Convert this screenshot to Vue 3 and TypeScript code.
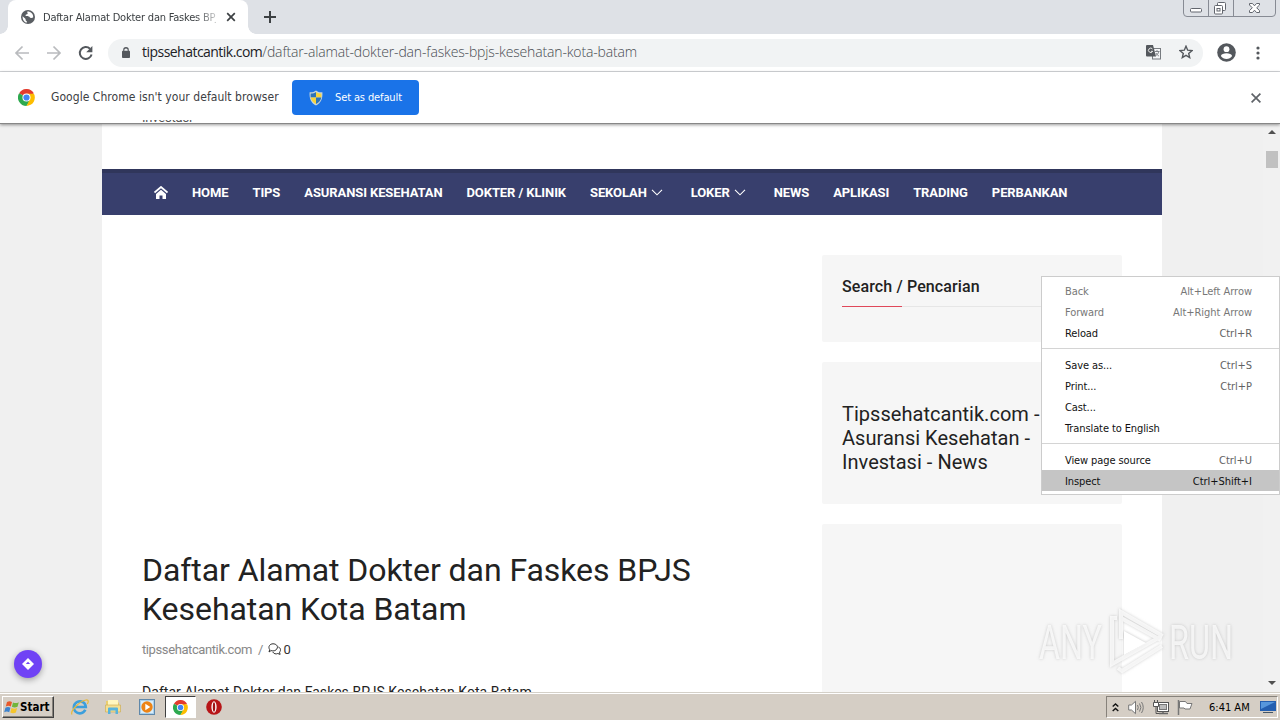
<script setup lang="ts">
interface NavItem { label: string; dropdown?: boolean }
interface MenuItem { label: string; shortcut?: string; state?: 'disabled' | 'active' }

const navItems: NavItem[] = [
  { label: 'HOME' },
  { label: 'TIPS' },
  { label: 'ASURANSI KESEHATAN' },
  { label: 'DOKTER / KLINIK' },
  { label: 'SEKOLAH', dropdown: true },
  { label: 'LOKER', dropdown: true },
  { label: 'NEWS' },
  { label: 'APLIKASI' },
  { label: 'TRADING' },
  { label: 'PERBANKAN' },
]

const menuGroups: MenuItem[][] = [
  [
    { label: 'Back', shortcut: 'Alt+Left Arrow', state: 'disabled' },
    { label: 'Forward', shortcut: 'Alt+Right Arrow', state: 'disabled' },
    { label: 'Reload', shortcut: 'Ctrl+R' },
  ],
  [
    { label: 'Save as...', shortcut: 'Ctrl+S' },
    { label: 'Print...', shortcut: 'Ctrl+P' },
    { label: 'Cast...' },
    { label: 'Translate to English' },
  ],
  [
    { label: 'View page source', shortcut: 'Ctrl+U' },
    { label: 'Inspect', shortcut: 'Ctrl+Shift+I', state: 'active' },
  ],
]
</script>

<template>
  <div class="screen">
    <header class="tabstrip">
      <div class="tab">
        <svg class="globe" width="14" height="14" viewBox="0 0 14 14">
          <circle cx="7" cy="7" r="7" fill="#5a5e63" />
          <path d="M1.600 6.200 4.600 9v1.200l1.300 1.200v1.200C3 12.200 1.400 9.500 1.600 6.200zM6.300 1.500c-.2 1.600.5 1.500.4 2.600-.9.500-2 .2-2.200 1.300-.1.900 2.800.3 3.600 1.200.6.700.9 1.400 1.800 1.500 1 .1 1.900-.2 2.300-.8C12.400 4 10 1.400 6.300 1.500z" fill="#fff" />
        </svg>
        <span class="tab-title">Daftar Alamat Dokter dan Faskes BPJS</span>
        <svg class="tab-close" width="10" height="10" viewBox="0 0 10 10"><path d="M1.200 1.200l7.600 7.600M8.800 1.200L1.200 8.800" stroke="#3c4043" stroke-width="1.700" /></svg>
      </div>
      <svg class="new-tab" width="12" height="12" viewBox="0 0 12 12"><path d="M6 0v12M0 6h12" stroke="#3c4043" stroke-width="2" /></svg>
      <svg class="window-buttons" width="94" height="18" viewBox="0 0 94 18">
        <path d="M.5 0v13q0 3.500 3.500 3.500h85q3.500 0 3.500-3.500V0M25.500 0v16M50.500 0v16" fill="none" stroke="#878b94" />
        <rect x="7.500" y="8.500" width="11" height="3.500" rx="1" fill="#fff" stroke="#62666e" />
        <g fill="#fff" stroke="#62666e"><rect x="34.500" y="2.500" width="8" height="8" rx="1" /><rect x="31.500" y="5.500" width="8" height="8.500" rx="1" /><rect x="34" y="8.500" width="3" height="2.500" /></g>
        <path d="M66.500 3.500h3l2 2.300 2-2.300h3v1.500l-2.800 2.800 2.800 2.800v1.900h-3l-2-2.300-2 2.300h-3v-1.900l2.800-2.800-2.800-2.800z" fill="#fff" stroke="#62666e" />
      </svg>
    </header>

    <div class="toolbar">
      <svg class="nav-buttons" width="80" height="20" viewBox="0 0 80 20">
        <path d="M15 10H2M8.500 3.500L2 10l6.500 6.500M33 10h13M39.500 3.500L46 10l-6.500 6.500" fill="none" stroke="#b9bbbe" stroke-width="1.700" />
        <path d="M76 5.700A6 6 0 1 0 77.600 11.600" fill="none" stroke="#54585d" stroke-width="2" /><path d="M78.400 3v6.200h-6.200z" fill="#54585d" />
      </svg>
      <div class="omnibox">
        <svg class="lock" width="8" height="11" viewBox="0 0 10 12" preserveAspectRatio="none"><rect x="0" y="4" width="10" height="8" rx="1" fill="#54585d" /><path d="M2.200 5V3.200a2.800 2.400 0 0 1 5.600 0V5" fill="none" stroke="#54585d" stroke-width="1.400" /></svg>
        <span class="url"><b>tipssehatcantik.com</b>/daftar-alamat-dokter-dan-faskes-bpjs-kesehatan-kota-batam</span>
        <svg class="translate" width="15" height="15" viewBox="0 0 15 15">
          <rect x="6.500" y="3.500" width="8" height="10.500" fill="#f5f6f8" stroke="#777b80" />
          <path d="M1 0h6l3 11.500H1q-1 0-1-1V1q0-1 1-1z" fill="#54585d" />
          <path d="M6.500 4a2.200 2.200 0 1 0 .2 2.300H5" fill="none" stroke="#eee" />
          <path d="M9 6.500h4.500M11 5v1.500M12.700 6.500c-.2 2-1.500 3.300-3 4M10 8c.8 1.600 1.800 2.500 3 3" fill="none" stroke="#777b80" stroke-width=".9" />
        </svg>
        <svg class="star" width="14" height="14" viewBox="0 0 14 14"><path d="M7 1.200l1.700 4 4.300.4-3.300 2.800 1 4.200L7 10.400l-3.700 2.200 1-4.200L1 5.600l4.300-.4z" fill="none" stroke="#54585d" stroke-width="1.400" /></svg>
      </div>
      <svg class="avatar" width="19" height="19" viewBox="0 0 19 19"><circle cx="9.500" cy="9.500" r="9.300" fill="#54585d" /><circle cx="9.500" cy="6.200" r="2.900" fill="#fff" /><path d="M3.900 13c.5-3.800 10.700-3.800 11.200 0a6.700 6.700 0 0 1-11.200 0z" fill="#fff" /></svg>
      <svg class="kebab" width="4" height="14" viewBox="0 0 4 14" fill="#54585d"><circle cx="2" cy="2" r="1.600" /><circle cx="2" cy="7" r="1.600" /><circle cx="2" cy="12" r="1.600" /></svg>
    </div>

    <div class="infobar">
      <svg width="17" height="17" viewBox="0 0 18 18">
        <path d="M9 9L1.200 4.500A9 9 0 0 1 16.800 4.500z" fill="#e33b2e" /><path d="M9 9L1.200 4.500A9 9 0 0 0 9 18l4-6z" fill="#2da94f" /><path d="M9 5h7.900A9 9 0 0 1 9 18l3.500-7z" fill="#fdbd00" />
        <circle cx="9" cy="9" r="4.300" fill="#fff" /><circle cx="9" cy="9" r="3.300" fill="#4285f4" />
      </svg>
      <span class="info-text">Google Chrome isn't your default browser</span>
      <button class="set-default">
        <svg width="14" height="16" viewBox="0 0 14 16">
          <path d="M7 .5C5 2 3 2.500.6 2.300.2 8.500 1.800 13 7 15.500 12.200 13 13.800 8.500 13.400 2.300 11 2.500 9 2 7 .5z" fill="#c5d4db" />
          <path d="M7 2v5.500H1.700C1.500 6 1.600 5 1.700 3.600 4 3.600 5.500 3 7 2z" fill="#2e74b8" /><path d="M7 2v5.500h5.300c.2-1.500.1-2.500 0-3.900C10 3.600 8.500 3 7 2zM7 7.500V14C4 12.500 2.200 10.500 1.700 7.500z" fill="#f7d43c" /><path d="M7 7.500V14c3-1.500 4.800-3.500 5.300-6.500z" fill="#2e74b8" />
        </svg>
        <span>Set as default</span>
      </button>
      <svg class="info-close" width="10" height="10" viewBox="0 0 10 10"><path d="M.6.6l8.800 8.800M9.400.6L.6 9.400" stroke="#5f6368" stroke-width="1.700" /></svg>
      <div class="tagline"><span>Investasi</span></div>
    </div>

    <main class="viewport">
      <div class="page">
        <nav class="site-nav">
          <svg class="home" width="14" height="13" viewBox="0 0 14 13"><path d="M.5 6.500L7 1l6.500 5.500" fill="none" stroke="#fff" stroke-width="1.800" /><path d="M7 3.800l5 4.300V13H8.500V9.500h-3V13H2V8.100z" fill="#fff" /></svg>
          <a v-for="item in navItems" :key="item.label" :class="{ dropdown: item.dropdown }">
            {{ item.label }}<svg v-if="item.dropdown" width="12" height="7" viewBox="0 0 12 7"><path d="M1 .8l5 5 5-5" fill="none" stroke="#fff" stroke-width="1.100" /></svg>
          </a>
        </nav>
        <div class="columns">
          <article>
            <h1>Daftar Alamat Dokter dan Faskes BPJS Kesehatan Kota Batam</h1>
            <div class="meta">
              <span class="author">tipssehatcantik.com</span><span class="slash">/</span>
              <svg width="13" height="13" viewBox="0 0 13 13" fill="none" stroke="#333"><path d="M1 9l.7-2.300C-.3 3.500 2 .8 5 .8s5 2 4.300 4.200C8.600 7.500 5.500 8.600 3 7.600z" /><path d="M10.300 4c2.700 1 2.700 3.600 1.200 5.100l.6 2.300-2.300-.9c-2 .9-4 .3-5-1.500" /></svg>
              <span class="count">0</span>
            </div>
            <p>Daftar Alamat Dokter dan Faskes BPJS Kesehatan Kota Batam</p>
          </article>
          <aside>
            <section class="card search"><h2>Search / Pencarian</h2></section>
            <section class="card about"><h3>Tipssehatcantik.com - Asuransi Kesehatan - Investasi - News</h3></section>
            <section class="card blank"></section>
          </aside>
        </div>
      </div>
      <div class="scrollbar">
        <svg width="8" height="4" viewBox="0 0 8 4"><path d="M0 4l4-4 4 4z" fill="#505050" /></svg>
        <i class="thumb"></i>
        <svg width="8" height="4" viewBox="0 0 8 4"><path d="M0 0l4 4 4-4z" fill="#505050" /></svg>
      </div>
      <button class="bubble"><svg width="12" height="12" viewBox="0 0 12 12"><path d="M6 0l6 6-6 6-6-6z" fill="#fff" /><path d="M6 3.800L8.200 6H3.800z" fill="#7042f5" /></svg></button>
    </main>

    <footer class="taskbar">
      <button class="start">
        <svg width="16" height="15" viewBox="0 0 16 15"><path d="M3 2c2-1.300 3.500-1 5 0L6.800 6.500c-1.600-1-3.300-1-5 0z" fill="#e8582a" /><path d="M9 2.400c2 1 3.700.8 5.800-.2l-1.300 4.500c-2 1-3.700 1-5.600 0z" fill="#72b53a" /><path d="M1.400 7.700c1.800-1 3.400-1 5 0l-1.200 4.500c-1.600-1-3.200-1-5 0z" fill="#3d83ce" /><path d="M7.500 8c1.900 1 3.700 1 5.600 0l-1.200 4.400c-2 1-3.600 1-5.600 0z" fill="#f5c52c" /></svg>
        <span>Start</span>
      </button>
      <svg class="ie" width="18" height="17" viewBox="0 0 18 17"><path d="M14.300 10.800A6 6 0 1 1 14.800 8H4" fill="none" stroke="#3c9fdc" stroke-width="2.600" /><path d="M1 15.500C-1 12 8 2.500 15 1c3.500-.7 2 3 1.300 4" fill="none" stroke="#e8b93a" stroke-width="1.200" /></svg>
      <svg class="explorer" width="16" height="16" viewBox="0 0 16 16"><path d="M1 2h5l1 1.500h7V13H1z" fill="#e9cd6f" /><path d="M3 1h10v5H3z" fill="#fff6bf" /><path d="M.5 6h15v7H.5z" fill="#f4df91" stroke="#c9aa4d" stroke-width=".6" /><path d="M3 15V9.500q0-1 1-1h8q1 0 1 1V15h-2.500v-3.500h-5V15z" fill="#58b3dc" /></svg>
      <svg class="player" width="16" height="16" viewBox="0 0 16 16"><rect x=".5" y=".5" width="15" height="15" fill="#a9d0ec" stroke="#6088aa" /><rect x="2" y="2" width="12" height="12" fill="#d9edfa" /><circle cx="8" cy="8" r="5.700" fill="#ed8416" /><path d="M6.300 4.800L11.300 8l-5 3.200z" fill="#fff" /></svg>
      <div class="running">
        <svg width="15" height="15" viewBox="0 0 18 18">
          <path d="M9 9L1.200 4.500A9 9 0 0 1 16.800 4.500z" fill="#e33b2e" /><path d="M9 9L1.200 4.500A9 9 0 0 0 9 18l4-6z" fill="#2da94f" /><path d="M9 5h7.900A9 9 0 0 1 9 18l3.500-7z" fill="#fdbd00" />
          <circle cx="9" cy="9" r="4.300" fill="#fff" /><circle cx="9" cy="9" r="3.300" fill="#4285f4" />
        </svg>
      </div>
      <svg class="opera" width="16" height="16" viewBox="0 0 16 16"><circle cx="8" cy="8" r="7.800" fill="#b71517" /><ellipse cx="8" cy="8" rx="2.600" ry="5.700" fill="#fff" /><ellipse cx="8" cy="8" rx="1.200" ry="4.700" fill="#a01214" /></svg>
      <div class="tray">
        <svg class="expand" width="7" height="9" viewBox="0 0 7 9"><path d="M.7 3.500l2.800-2.500 2.800 2.500M.7 8l2.800-2.500L6.300 8" fill="none" stroke="#111" stroke-width="1.400" /></svg>
        <svg class="sound" width="16" height="15" viewBox="0 0 16 15"><path d="M.7 5h2.800L7.500 1.300v12.400L3.500 10H.7z" fill="#fff" stroke="#777" /><path d="M9.500 5q1.500 2.500 0 5M11.500 3.500q2.800 4 0 8M13.500 2q3.500 5.500 0 11" fill="none" stroke="#777" /></svg>
        <svg class="network" width="16" height="15" viewBox="0 0 16 15"><rect x="4.500" y="2.500" width="11" height="9" fill="#fff" stroke="#555" /><rect x="6.500" y="4.500" width="7" height="5" fill="#bbb" stroke="#777" /><path d="M6 13.500h9M10 11.500v2" stroke="#666" stroke-width="1.500" /><path d="M.5 2.500h5v4h-5zM1.500 0v2.500M4.500 0v2.500" fill="#fff" stroke="#555" /><path d="M3 7v6.500h3" fill="none" stroke="#555" /></svg>
        <svg class="flag" width="16" height="15" viewBox="0 0 16 15"><path d="M2.500 1.500h6l1.500 2h5l-2 5.500H8L7 8H2.500z" fill="#fff" stroke="#777" /><path d="M1.500 0v15" stroke="#777" stroke-width="1.500" /></svg>
        <time>6:41 AM</time>
        <svg width="16" height="14" viewBox="0 0 16 14"><rect x="0" y="1" width="16" height="10" fill="#245fb0" /><path d="M1 2h14L1 9z" fill="#5797dc" /><path d="M3 12.500h10" stroke="#456" /></svg>
      </div>
    </footer>

    <div class="context-menu">
      <template v-for="(group, index) in menuGroups" :key="index">
        <hr v-if="index > 0" />
        <div v-for="item in group" :key="item.label" class="menu-item" :class="item.state">
          <span>{{ item.label }}</span><span class="shortcut">{{ item.shortcut }}</span>
        </div>
      </template>
    </div>

    <svg class="watermark" width="204" height="70" viewBox="0 0 204 70">
      <g class="mark-text">
        <text x="3" y="53" textLength="63" lengthAdjust="spacingAndGlyphs">ANY</text>
        <text x="133" y="53" textLength="64" lengthAdjust="spacingAndGlyphs">RUN</text>
      </g>
      <g class="mark-logo" fill="none" stroke-width="4">
        <path d="M85 33V6l40 23-2 4-38-21" />
        <path d="M81 12h-5v46l48-27" />
        <path d="M82 62l4 3 40-25" />
      </g>
      <path d="M88 25v24l22-12z" fill="#fff" />
    </svg>
  </div>
</template>

<style>
body { margin: 0; overflow: hidden; }
</style>

<style scoped>
* { box-sizing: border-box; }
button { border: 0; padding: 0; margin: 0; }
svg { display: block; flex: none; }
.screen { position: relative; width: 1280px; height: 720px; display: flex; flex-direction: column; overflow: hidden; background: #fff; font-family: "DejaVu Sans Condensed", "DejaVu Sans", sans-serif; font-stretch: condensed; font-size: 11px; white-space: nowrap; }

.tabstrip { height: 34px; flex: none; display: flex; background: #dee1e6; }
.tab { position: relative; width: 240px; height: 34px; margin-left: 8px; padding: 0 12px 0 13px; display: flex; align-items: center; background: #fff; border-radius: 8px 8px 0 0; color: #3c4043; }
.tab::before, .tab::after { content: ""; position: absolute; bottom: 0; width: 8px; height: 8px; }
.tab::before { left: -8px; background: radial-gradient(circle at 0 0, transparent 7.5px, #fff 8px); }
.tab::after { right: -8px; background: radial-gradient(circle at 100% 0, transparent 7.5px, #fff 8px); }
.tab-title { width: 175px; margin: 1px 9px 0 8px; overflow: hidden; mask-image: linear-gradient(90deg, #000 88%, #0004 100%); line-height: 16px; letter-spacing: -0.2px; }
.tab-close { margin-left: 1px; }
.new-tab { margin: 11px 0 0 16px; }
.window-buttons { margin-left: auto; margin-right: 3px; }

.toolbar { height: 38px; flex: none; display: flex; align-items: center; padding: 0 20px 0 14px; border-bottom: 1px solid #d6d8db; background: #fff; }
.omnibox { width: 1095px; height: 28px; margin-left: 14px; padding: 0 10px 0 14px; display: flex; align-items: center; background: #f1f3f4; border-radius: 14px; }
.lock { margin-bottom: 1px; }
.url { margin: -2px 0 0 12px; font-family: "Open Sans", sans-serif; font-stretch: normal; font-size: 14px; font-weight: 300; letter-spacing: -0.15px; color: #484c52; }
.url b { font-weight: 400; letter-spacing: -0.53px; color: #202124; }
.translate { margin: 0 18px 0 auto; }
.star { margin-top: -1px; }
.avatar { margin-left: 14px; margin-top: -1px; }
.kebab { margin-left: auto; }

.infobar { position: relative; z-index: 2; height: 52px; flex: none; display: flex; align-items: center; padding: 0 19px 0 18px; background: #fff; border-bottom: 1px solid #878787; box-shadow: 0 1px 3px #0006; color: #3c4043; }
.info-text { width: 229px; margin: -1px 0 0 16px; font-size: 12px; letter-spacing: 0.05px; }
.set-default { width: 127px; height: 35px; margin-left: 12px; padding-left: 17px; display: flex; align-items: center; gap: 12px; border-radius: 4px; background: #1a73e8; color: #fff; font: inherit; letter-spacing: -0.12px; }
.info-close { margin-left: auto; }
.tagline { position: absolute; left: 142px; bottom: 0; height: 3px; overflow: hidden; display: flex; align-items: flex-end; font: 13px/15px Roboto, sans-serif; letter-spacing: -0.2px; color: #555; }
.tagline span { margin-bottom: -2px; }

.viewport { position: relative; height: 568px; flex: none; overflow: hidden; display: flex; justify-content: space-between; padding-left: 102px; background: #f0f0f0; font-family: Roboto, sans-serif; font-stretch: normal; }
.page { width: 1060px; padding-top: 45px; background: #fff; }
.site-nav { height: 46px; padding: 0 0 4px 52px; display: flex; align-items: center; gap: 24px; background: #383f6d; border-top: 4px solid #30365b; color: #fff; font-size: 13px; font-weight: 700; letter-spacing: -0.1px; }
.site-nav a { display: flex; align-items: center; }
.site-nav svg { margin-left: 4px; }
.site-nav .home { margin: 0; }
.site-nav .dropdown { margin-right: 4px; }
.columns { padding: 40px 40px 0; display: flex; justify-content: space-between; }
article { width: 640px; padding-top: 296px; }
h1 { margin: 0; width: 600px; white-space: normal; font-size: 32px; line-height: 39px; font-weight: 400; letter-spacing: -0.06px; color: #222; }
.meta { height: 16px; margin-top: 12px; display: flex; align-items: center; font-size: 13px; color: #888; }
.author { letter-spacing: -0.4px; }
.slash { margin: 0 5px 0 6px; }
.count { margin-left: 2px; color: #333; letter-spacing: -0.3px; }
p { margin: 27px 0 0; font-size: 14px; line-height: 16px; letter-spacing: 0.05px; color: #222; }
aside { width: 300px; display: flex; flex-direction: column; gap: 20px; }
.card { padding: 0 20px; background: #f6f6f6; border-radius: 2px; }
.search { height: 87px; padding-top: 20px; }
h2 { position: relative; margin: 0; height: 32px; border-bottom: 1px solid #e6e6e6; font-size: 16px; line-height: 23px; font-weight: 500; letter-spacing: 0.12px; color: #222; }
h2::after { content: ""; position: absolute; left: 0; bottom: -1px; width: 60px; height: 1px; background: #e0485a; }
.about { height: 142px; padding-top: 40px; }
h3 { margin: 0; width: 220px; white-space: normal; font-size: 20px; line-height: 24px; font-weight: 400; letter-spacing: 0.03px; color: #222; }
.blank { height: 200px; }
.scrollbar { width: 17px; padding: 6px 0 7px; display: flex; flex-direction: column; align-items: center; background: #f1f1f1; }
.thumb { width: 12px; height: 17px; margin: 17px 2px auto 0; background: #c1c1c1; align-self: flex-end; }
.bubble { position: absolute; left: 14px; top: 526px; width: 28px; height: 28px; display: grid; place-items: center; border-radius: 50%; background: #7042f5; box-shadow: 0 2px 6px #0005; }

.taskbar { height: 28px; flex: none; display: flex; align-items: center; padding: 1px 2px 0; background: #d5cec5; border-top: 1px solid #d4d0c8; box-shadow: inset 0 1px #fff; color: #000; }
.start { width: 52px; height: 22px; padding-left: 1px; display: flex; align-items: center; gap: 0; background: #d5cec5; border: 1px solid; border-color: #fff #404040 #404040 #fff; box-shadow: inset -1px -1px #87827b; color: #000; font: bold 11.5px "DejaVu Sans Condensed", "DejaVu Sans", sans-serif; }
.ie { margin-left: 17px; }
.explorer { margin-left: 16px; }
.player { margin-left: 18px; }
.running { width: 31px; height: 22px; margin: 0 10px 0 10px; display: grid; place-items: center; background: #fff; border: 1px solid; border-color: #404040 #fff #fff #404040; }
.tray { width: 172px; height: 22px; margin-left: auto; padding: 0 1px 0 5px; display: flex; align-items: center; border: 1px solid; border-color: #87827b #fff #fff #87827b; }
.sound { margin-left: 9px; }
.network { margin-left: 9px; }
.flag { margin-left: 8px; }
time { width: 42px; margin: 0 10px 0 16px; }

.context-menu { position: absolute; z-index: 3; left: 1041px; top: 276px; width: 239px; height: 219px; padding: 3px 0; background: #fff; border: 1px solid #ccc; color: #111; letter-spacing: -0.1px; }
.menu-item { height: 21px; padding: 2px 27px 0 23px; display: flex; align-items: center; justify-content: space-between; }
.shortcut { color: #626262; letter-spacing: -0.03px; }
.disabled { color: #777; }
.disabled .shortcut { color: #777; }
.active { background: #c5c5c5; }
.active .shortcut { color: #111; }
hr { height: 1px; margin: 5px 0; border: 0; background: #d4d4d4; }

.watermark { position: absolute; z-index: 2; left: 1036px; top: 606px; filter: drop-shadow(0 0 1.5px #8888); }
.mark-text { font: 48px Roboto, sans-serif; fill: #fff; opacity: .75; }
.mark-logo { stroke: #fff; opacity: .75; }
</style>
